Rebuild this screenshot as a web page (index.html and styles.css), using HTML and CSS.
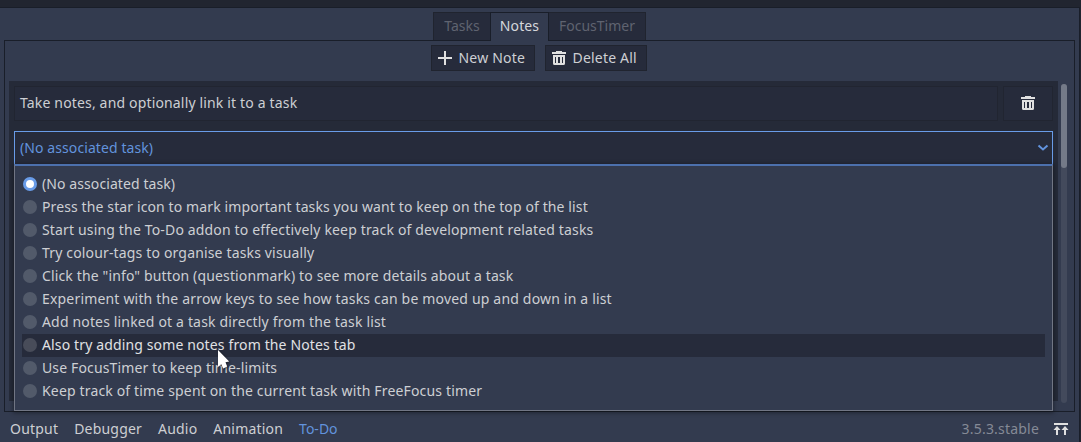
FILE: index.html
```html
<!DOCTYPE html>
<html lang="en">
<head>
<meta charset="utf-8">
<title>To-Do</title>
<link rel="stylesheet" href="styles.css">
</head>
<body>
<svg class="defs" width="0" height="0">
  <symbol id="trash" viewBox="0 0 14 14"><path fill="currentColor" fill-rule="evenodd" d="M4 0h6v1h4v2H0V1h4zM1 4h12v8.500q0 1.500-1.500 1.500h-9Q1 14 1 12.500zM3 6v6h1V6zM6 6v6h2V6zM10 6v6h1V6z"/></symbol>
</svg>
<div class="editor">
  <nav class="tabs">
    <span class="tab tasks">Tasks</span>
    <span class="tab notes active">Notes</span>
    <span class="tab timer">FocusTimer</span>
  </nav>
  <main class="panel">
    <div class="toolbar">
      <button class="button new"><svg width="14" height="14" viewBox="0 0 14 14"><path fill="currentColor" d="M6 0h2v6h6v2H8v6H6V8H0V6h6z"/></svg>New Note</button>
      <button class="button delete"><svg width="14" height="14"><use href="#trash"/></svg>Delete All</button>
    </div>
    <div class="scroll">
      <section class="note">
        <div class="note-row">
          <div class="field">Take notes, and optionally link it to a task</div>
          <button class="remove"><svg width="14" height="14"><use href="#trash"/></svg></button>
        </div>
        <div class="select">
          <span class="value">(No associated task)</span>
          <svg width="12" height="8" viewBox="0 0 12 8"><path d="M1.500 1.500L6 5.500l4.500-4" fill="none" stroke="currentColor" stroke-width="2"/></svg>
          <ul class="menu">
            <li><i class="radio on"></i>(No associated task)</li>
            <li><i class="radio"></i>Press the star icon to mark important tasks you want to keep on the top of the list</li>
            <li><i class="radio"></i>Start using the To-Do addon to effectively keep track of development related tasks</li>
            <li><i class="radio"></i>Try colour-tags to organise tasks visually</li>
            <li><i class="radio"></i>Click the "info" button (questionmark) to see more details about a task</li>
            <li><i class="radio"></i>Experiment with the arrow keys to see how tasks can be moved up and down in a list</li>
            <li><i class="radio"></i>Add notes linked ot a task directly from the task list</li>
            <li class="hover"><i class="radio"></i>Also try adding some notes from the Notes tab</li>
            <li><i class="radio"></i>Use FocusTimer to keep time-limits</li>
            <li><i class="radio"></i>Keep track of time spent on the current task with FreeFocus timer</li>
          </ul>
        </div>
      </section>
      <div class="track"><div class="thumb"></div></div>
    </div>
  </main>
  <footer class="status">
    <span>Output</span><span>Debugger</span><span>Audio</span><span>Animation</span><span class="current">To-Do</span>
    <span class="version">3.5.3.stable</span>
    <svg class="expand" width="16" height="13" viewBox="0 0 16 13"><path fill="currentColor" d="M1 0h14v2H1zM4 3l3.500 4H5v5H3V7H.5zM12 3l3.500 4H13v5h-2V7H8.500z"/></svg>
  </footer>
</div>
<svg class="cursor" width="14" height="22" viewBox="0 0 14 22"><path fill="#fff" d="M1 1L12.200 12.500 8.500 13.300 10.200 17.500 6.300 19.500 4.300 15.300 1 17.700z"/></svg>
</body>
</html>
```
FILE: styles.css
```css
* { box-sizing: border-box; }
body {
  margin: 0;
  width: 1081px;
  height: 442px;
  overflow: hidden;
  position: relative;
  padding: 7px 1px 0 0;
  background: #212530;
  color: #cdcfd3;
  font: 14px/20px "Noto Sans", sans-serif;
}
svg { display: block; flex: none; }
.defs { position: absolute; }
.editor {
  height: 435px;
  display: flex;
  flex-direction: column;
  background: #333b4f;
  border-top: 1px solid #191e29;
  border-right: 1px solid #191e29;
}
.tabs {
  display: flex;
  justify-content: center;
  height: 32px;
  padding-top: 4px;
  flex: none;
}
.tab {
  height: 28px;
  padding-top: 3px;
  text-align: center;
  background: #262b3b;
  border: 1px solid #20242f;
  border-bottom: 0;
  color: #5f6370;
}
.tasks { width: 57px; border-right: 0; }
.timer { width: 97px; border-left: 0; }
.notes { width: 59px; letter-spacing: .1px; }
.tab.active {
  height: 29px;
  margin-bottom: -1px;
  background: #333b4f;
  border-color: #191e29;
  color: #d5d7db;
  position: relative;
}
.panel {
  height: 372px;
  margin: 0 4px;
  padding: 4px 6px 0 4px;
  border: 1px solid #191e29;
  flex: none;
}
.toolbar { display: flex; justify-content: center; gap: 10px; }
.button {
  display: flex;
  align-items: center;
  gap: 7px;
  height: 26px;
  padding: 0 0 0 6px;
  background: #262b3b;
  border: 1px solid #20242f;
  color: inherit;
  font: inherit;
  letter-spacing: .2px;
}
.button svg, .remove svg { color: #e0e0e0; }
.new { width: 104px; }
.delete { width: 102px; }
.scroll { display: flex; gap: 3px; margin-top: 10px; height: 320px; }
.note { width: 1049px; padding: 5px; background: #252a38; }
.note-row { display: flex; gap: 5px; height: 35px; }
.field, .remove { background: #262b3b; border: 1px solid #212531; }
.field { flex: 1; padding: 6px 5px; letter-spacing: .16px; }
.remove { width: 50px; display: flex; align-items: center; justify-content: center; padding: 0 0 2px; }
.select {
  position: relative;
  display: flex;
  align-items: center;
  justify-content: space-between;
  height: 35px;
  margin-top: 10px;
  padding: 0 3px 1px 5px;
  border: 1px solid #699ce8;
  background: #262b3b;
  color: #6293dd;
}
.value { letter-spacing: .09px; padding-bottom: 1px; }
.menu {
  position: absolute;
  left: -1px;
  top: 32px;
  width: 1039px;
  height: 247px;
  margin: 0;
  padding: 7px;
  list-style: none;
  background: #333b4f;
  border: 1px solid #717684;
  border-top: 2px solid #4c70ad;
  box-shadow: 0 1px 4px 1px rgba(0, 0, 0, .35);
  color: #cdcfd3;
}
.menu li {
  display: flex;
  align-items: center;
  gap: 5px;
  height: 23px;
  padding: 0 0 1px 1px;
  letter-spacing: .16px;
}
.menu li:nth-child(1) { letter-spacing: .09px; }
.menu li:nth-child(2) { letter-spacing: .115px; }
.menu li:nth-child(5) { letter-spacing: .14px; }
.menu li:nth-child(6) { letter-spacing: .18px; }
.menu li:nth-child(8), .menu li:nth-child(9) { letter-spacing: .135px; }
.menu .hover { background: #262b3b; color: #e0e1e4; }
.radio { width: 14px; height: 14px; border-radius: 50%; background: #525a6a; }
.radio.on { background: #fff; border: 3px solid #699ce8; }
.hover .radio { background: #484c59; }
.track { width: 6px; height: 319px; margin-top: 3px; border-radius: 3px; background: #434a5c; }
.thumb { height: 84px; border-radius: 3px; background: #747a88; }
.status { display: flex; align-items: center; gap: 16px; height: 30px; padding: 4px 10px 0; letter-spacing: .2px; }
.current { color: #6293dd; letter-spacing: 0; }
.version { margin-left: auto; color: #858a96; }
.expand { color: #e0e0e0; margin-left: -2px; }
.cursor { position: absolute; left: 217px; top: 349px; filter: drop-shadow(1px 1px 1px rgba(0, 0, 0, .5)); }
```
